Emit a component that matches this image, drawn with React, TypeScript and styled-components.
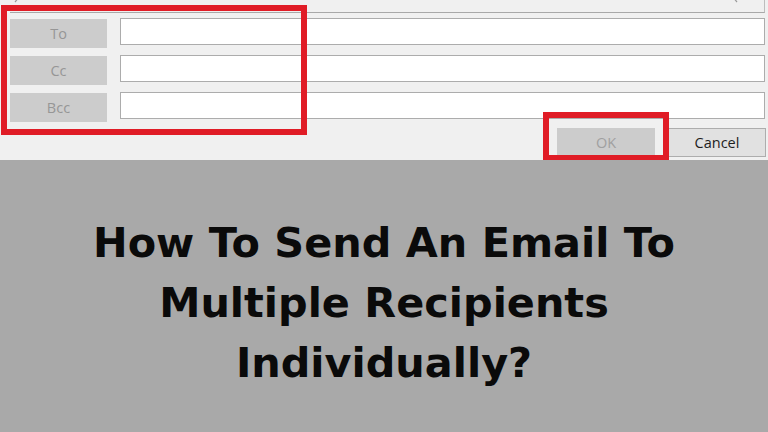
import styled, { createGlobalStyle } from 'styled-components';

const GlobalStyle = createGlobalStyle`
	html, body {
		margin: 0;
		padding: 0;
		background: #a9a9a9;
	}
	* {
		box-sizing: border-box;
	}
`;

const Page = styled.div`
	width: 768px;
	height: 432px;
	display: flex;
	flex-direction: column;
	overflow: hidden;
`;

const Dialog = styled.div`
	position: relative;
	height: 160px;
	flex-shrink: 0;
	background: #f0f0f0;
	overflow: hidden;
	font-family: 'Open Sans', 'Liberation Sans', sans-serif;
`;

const TopStrip = styled.div`
	height: 13px;
	margin: 0 3px 0 10px;
	border-bottom: 1px solid #a8a8a8;
	border-right: 1px solid #bdbdbd;
	display: flex;
	justify-content: space-between;
	align-items: flex-start;
	padding: 0 24px 0 2px;
`;

const Fields = styled.div`
	display: flex;
	flex-direction: column;
	gap: 7px;
	margin-top: 5px;
	padding: 0 3px 0 10px;
`;

const Row = styled.div`
	display: flex;
	align-items: flex-start;
	gap: 13px;
`;

const FieldLabel = styled.div`
	width: 97px;
	height: 29px;
	margin-top: 1px;
	background: #cccccc;
	color: #969696;
	font-size: 14.5px;
	display: flex;
	align-items: center;
	justify-content: center;
`;

const FieldInput = styled.div`
	flex: 1;
	height: 27px;
	background: #ffffff;
	border: 1px solid #acacac;
`;

const Buttons = styled.div`
	display: flex;
	justify-content: flex-end;
	gap: 13px;
	margin-top: 6px;
	padding-right: 2px;
`;

const DialogButton = styled.div<{ $disabled?: boolean }>`
	width: 98px;
	height: 29px;
	display: flex;
	align-items: center;
	justify-content: center;
	font-size: 14.5px;
	background: ${(p) => (p.$disabled ? '#cccccc' : '#e1e1e1')};
	color: ${(p) => (p.$disabled ? '#a0a0a0' : '#1e1e1e')};
	border: 1px solid ${(p) => (p.$disabled ? '#cccccc' : '#adadad')};
`;

const Highlight = styled.div<{ $left: number; $top: number; $w: number; $h: number }>`
	position: absolute;
	left: ${(p) => p.$left}px;
	top: ${(p) => p.$top}px;
	width: ${(p) => p.$w}px;
	height: ${(p) => p.$h}px;
	border: 6px solid #e01c26;
	pointer-events: none;
`;

const Banner = styled.div`
	flex: 1;
	background: #a9a9a9;
	display: flex;
	align-items: center;
	justify-content: center;
	padding-top: 14px;
`;

const Title = styled.h1`
	margin: 0;
	text-align: center;
	font-family: 'DejaVu Sans', 'Liberation Sans', sans-serif;
	font-weight: bold;
	font-size: 41.4px;
	line-height: 60px;
	color: #0a0a0a;
`;

const Chevron = ({ dir }: { dir: 'left' | 'right' }) => (
	<svg width="10" height="8" viewBox="0 0 10 8">
		<path
			d={dir === 'left' ? 'M8 -4 L3 2' : 'M2 -4 L7 2'}
			stroke="#9a9a9a"
			strokeWidth="1.2"
			fill="none"
		/>
	</svg>
);

const App = () => {
	return (
		<Page>
			<GlobalStyle />
			<Dialog>
				<TopStrip>
					<Chevron dir="left" />
					<Chevron dir="right" />
				</TopStrip>
				<Fields>
					{['To', 'Cc', 'Bcc'].map((label) => (
						<Row key={label}>
							<FieldLabel>{label}</FieldLabel>
							<FieldInput />
						</Row>
					))}
				</Fields>
				<Buttons>
					<DialogButton $disabled>OK</DialogButton>
					<DialogButton>Cancel</DialogButton>
				</Buttons>
				<Highlight $left={1} $top={5} $w={306} $h={130} />
				<Highlight $left={543} $top={112} $w={126} $h={49} />
			</Dialog>
			<Banner>
				<Title>
					How To Send An Email To
					<br />
					Multiple Recipients
					<br />
					Individually?
				</Title>
			</Banner>
		</Page>
	);
};

export default App;
